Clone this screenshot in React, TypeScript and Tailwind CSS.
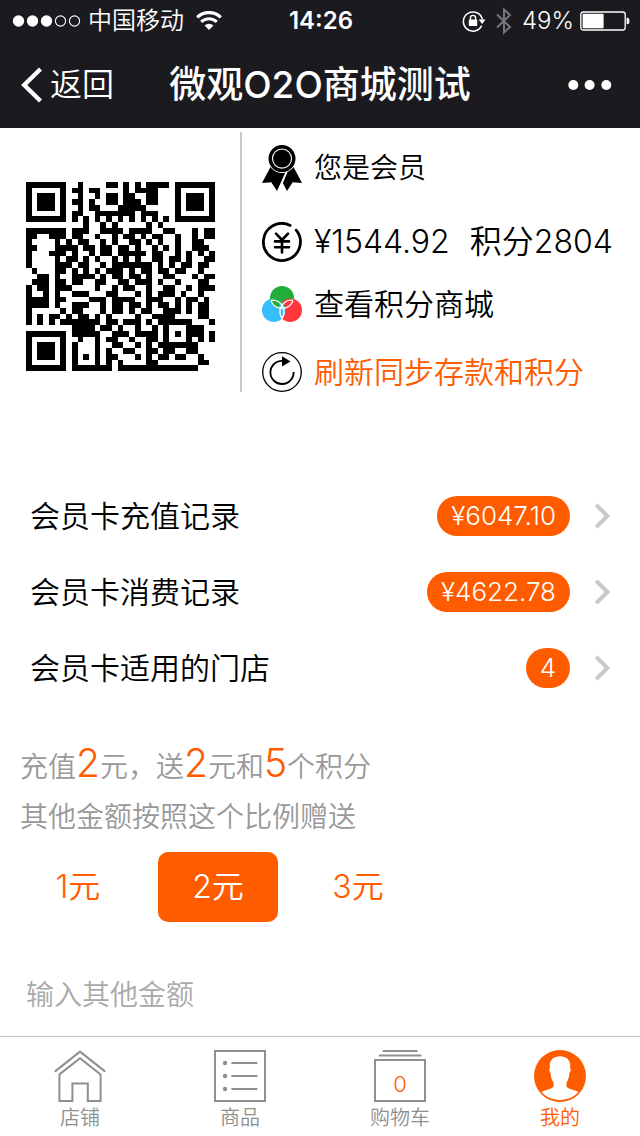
import React from "react";

const QR_ROWS = [
  "#######..#....##.#.#.####.#######",
  "#.....#.##.##....#.####...#.....#",
  "#.###.#..#..#.##.##..##...#.###.#",
  "#.###.#.##.#..##.###.##...#.###.#",
  "#.###.#..#.##...#####.....#.###.#",
  "#.....#.##..#######.###...#.....#",
  "#######.#.#.#.#.#.#.#.#.#.#######",
  "..........#..#.#.....#.#.........",
  "#######.###..####.####..##...#.##",
  "##..###.##..#..#.##.#.##..#..#.##",
  "#....#.#.##..#.#..##.#.#..#..##..",
  "##...####.##.##.##.#..#.#.#..###.",
  "#...###.#..#.##.#####.##..#.#.#.#",
  "#....#.##.#.#..#.#.#..##.##.#..##",
  "#....###.##..#.#######.#.#.##.##.",
  ".#...##.#.#.#.###.#.##.##.##..#..",
  "..##.#..####.#.##.##.#..##...#.##",
  ".###.##.##..##..##.###.#..#...##.",
  "#.##.###....#..#.##..#..##..#.###",
  "#..#.#..###...##...#.#.###.#..#..",
  "####.##....###.####..###..#.##.#.",
  "####.#..###..#.##.##.#.##.#.#.##.",
  "#.....#.##...#.##.#.##..###.#.##.",
  "#.#.##.#.##.#.#....#..####....##.",
  "#.#.#.#######.##.###.#.######...#",
  "........####.##.#..#..#.#...###..",
  "#######.#####..###.####.#.#.###.#",
  "#.....#..#..#.##..#..##.#...#.#.#",
  "#.###.#.#...#..##..#.#.#######...",
  "#.###.#.#...#.#..##..##.##..##...",
  "#.###.#.#.#.#.##...#.#.##.##..#..",
  "#.....#.#...#.#.#....##.......##.",
  "#######.#######.##############...",
];

function QrCode() {
  return (
    <svg
      viewBox="0 0 33 33"
      className="size-[189px]"
      shapeRendering="crispEdges"
      role="img"
      aria-label="会员二维码"
    >
      {QR_ROWS.map((row, y) =>
        Array.from(row.matchAll(/#+/g)).map((run) => (
          <rect key={`${y}-${run.index}`} x={run.index} y={y} width={run[0].length} height={1} />
        )),
      )}
    </svg>
  );
}

function StatusBar() {
  return (
    <div className="grid h-10 grid-cols-[1fr_auto_1fr] items-center pt-px pr-[10px] pl-3 text-2xl">
      <div className="flex items-center">
        <svg viewBox="0 0 70 14" className="mr-[6px] h-[14px] w-[70px]" fill="none" aria-hidden="true">
          <circle cx="6.5" cy="7" r="5.7" fill="#fff" />
          <circle cx="20.5" cy="7" r="5.7" fill="#fff" />
          <circle cx="34.5" cy="7" r="5.7" fill="#fff" />
          <circle cx="48.5" cy="7" r="5.1" stroke="#fff" strokeWidth="1.1" />
          <circle cx="62.5" cy="7" r="5.1" stroke="#fff" strokeWidth="1.1" />
        </svg>
        <span className="leading-8 font-[350]">中国移动</span>
        <svg viewBox="0 0 26 20" className="ml-3 h-5 w-[26px]" fill="none" stroke="#fff" aria-hidden="true">
          <path d="M1.2 6.3a17 17 0 0 1 23.6 0" strokeWidth="3.2" />
          <path d="M5.2 10.9a11.2 11.2 0 0 1 15.6 0" strokeWidth="3" />
          <path d="M13 19 8.6 14.6a6.2 6.2 0 0 1 8.8 0Z" fill="#fff" stroke="none" />
        </svg>
      </div>
      <span className="font-semibold">14:26</span>
      <div className="flex items-center justify-end">
        <svg viewBox="0 0 24 22" className="h-[22px] w-6" fill="none" aria-hidden="true">
          <path d="M19.7 15.6A9.6 9.6 0 1 1 20.4 9.6" stroke="#fff" strokeWidth="1.5" />
          <path d="M16.6 9.6h7l-3.5 4.4Z" fill="#fff" />
          <rect x="6.8" y="9.6" width="8.4" height="6.4" rx="0.8" fill="#fff" />
          <path d="M8.4 10V8a2.6 2.6 0 0 1 5.2 0v2" stroke="#fff" strokeWidth="1.4" />
        </svg>
        <svg viewBox="0 0 16 28" className="ml-[10px] h-7 w-4" fill="none" stroke="#77777a" strokeWidth="2" aria-hidden="true">
          <path d="M1 7.5 14 20 8 25.5V2.5L14 8 1 20.5" />
        </svg>
        <span className="ml-[10px] font-[350]">49%</span>
        <svg viewBox="0 0 50 20" className="ml-[6px] h-5 w-[50px]" fill="none" aria-hidden="true">
          <rect x="0.8" y="1" width="44.4" height="18" rx="2.5" stroke="#fff" strokeWidth="1.3" />
          <rect x="2.6" y="2.8" width="21" height="14.4" rx="0.8" fill="#fff" />
          <path d="M46.6 6.8h.8a2 3.2 0 0 1 0 6.4h-.8Z" fill="#fff" />
        </svg>
      </div>
    </div>
  );
}

function TitleBar() {
  return (
    <div className="grid h-[88px] grid-cols-[1fr_auto_1fr] items-center px-5 pt-[2px]">
      <button type="button" className="flex items-center text-[32px] leading-10 font-[350]">
        <svg viewBox="0 0 24 36" className="mr-[6px] h-9 w-6" fill="none" stroke="#fff" strokeWidth="4.4" aria-hidden="true">
          <path d="M20.5 2 4.2 18 20.5 34" />
        </svg>
        返回
      </button>
      <h1 className="text-[37px] leading-10 font-medium">微观O2O商城测试</h1>
      <button type="button" aria-label="更多" className="mr-2 justify-self-end">
        <svg viewBox="0 0 44 10" className="h-[10px] w-11" fill="#fff">
          <circle cx="5.3" cy="5" r="5" />
          <circle cx="21.6" cy="5" r="5" />
          <circle cx="38.3" cy="5" r="5" />
        </svg>
      </button>
    </div>
  );
}

function MedalIcon() {
  return (
    <svg viewBox="0 0 40 46" className="h-[46px] w-10" aria-hidden="true">
      <path d="M8.5 22 0 38l9.3-.8L15 46l9-20Z" />
      <path d="M31.5 22 40 38l-9.3-.8L25 46l-4.4-8.500L26 25Z" />
      <path d="M25.600 25 18.400 42" stroke="#fff" strokeWidth="1.400" />
      <circle cx="20" cy="13.600" r="14.400" fill="#fff" />
      <circle cx="20" cy="13.600" r="11.800" fill="none" stroke="#000" strokeWidth="3.400" />
      <circle cx="20" cy="13.600" r="9" />
    </svg>
  );
}

function YenIcon() {
  return (
    <svg viewBox="0 0 40 40" className="size-10" fill="none" stroke="#000" strokeWidth="2.8" strokeLinecap="round" aria-hidden="true">
      <path d="M34.2 8.2A18.5 18.5 0 1 1 28.2 3.4" />
      <path d="m14 11.6 6 6.4 6-6.4M20 18v12.4M13 19.4h14M13 25.2h14" strokeWidth="2.6" />
    </svg>
  );
}

function ColorsIcon() {
  return (
    <svg viewBox="0 0 40 36" className="h-9 w-10" aria-hidden="true">
      <defs>
        <clipPath id="top-circle"><circle cx="20" cy="12" r="11.6" /></clipPath>
        <clipPath id="left-circle"><circle cx="11.6" cy="24.4" r="11.6" /></clipPath>
      </defs>
      <circle cx="20" cy="12" r="12" fill="#22ac38" />
      <circle cx="11.8" cy="24.2" r="11.8" fill="#36bfff" />
      <circle cx="28.2" cy="24.2" r="11.8" fill="#ff373c" />
      <circle cx="11.8" cy="24.2" r="11.8" fill="#22ac38" clipPath="url(#top-circle)" />
      <circle cx="28.2" cy="24.2" r="11.8" fill="#36bfff" clipPath="url(#left-circle)" />
      <g fill="none" stroke="#fff" strokeWidth="1.3">
        <path d="M9 14.8a11.8 11.8 0 0 0 22 0" />
        <path d="M9 14.2a11.8 11.8 0 0 1 11 18.3" />
        <path d="M31 14.2a11.8 11.8 0 0 0-11 18.3" />
      </g>
    </svg>
  );
}

function RefreshIcon() {
  return (
    <svg viewBox="0 0 40 40" className="size-10" fill="none" stroke="#000" aria-hidden="true">
      <circle cx="20" cy="20" r="19.3" strokeWidth="1.3" />
      <path d="M31.6 20A11.6 11.6 0 1 1 20 8.8" strokeWidth="1.8" />
      <path d="M20 4.2 28.6 9.4 20 14.6Z" fill="#000" stroke="none" />
    </svg>
  );
}

function RecordRow({ label, value }: { label: string; value: string }) {
  return (
    <li>
      <a href="#" className="flex h-[76px] items-center px-[30px]">
        <span className="grow text-3xl leading-10">{label}</span>
        <span className="h-10 rounded-full bg-[#ff5c00] px-[14px] text-[26px] leading-10 font-light text-white">
          {value}
        </span>
        <svg viewBox="0 0 16 26" className="ml-6 h-[26px] w-4" fill="none" stroke="#c7c7cc" strokeWidth="4" aria-hidden="true">
          <path d="M2.2 1.8 13.4 13 2.2 24.2" />
        </svg>
      </a>
    </li>
  );
}

function Amount({ children }: { children: string }) {
  return <span className="text-[39px] text-[#ff5c00]">{children}</span>;
}

function HomeIcon() {
  return (
    <svg viewBox="0 0 52 52" className="size-[52px]" fill="none" stroke="#8f8f8f" strokeWidth="2" aria-hidden="true">
      <path d="M.8 21.6 26 1.6l25.2 20" />
      <path d="M5.4 24.4 26 8.2l20.6 16.2V51H33.8V33.4H18.4V51H5.4Z" />
    </svg>
  );
}

function ListIcon() {
  return (
    <svg viewBox="0 0 52 52" className="size-[52px]" fill="none" stroke="#8f8f8f" strokeWidth="2" aria-hidden="true">
      <rect x="1" y="1" width="50" height="50" />
      <path d="M17.4 13h26M17.4 26h26M17.4 39h26" />
      <g fill="#8f8f8f" stroke="none">
        <circle cx="11" cy="13" r="2.2" />
        <circle cx="11" cy="26" r="2.2" />
        <circle cx="11" cy="39" r="2.2" />
      </g>
    </svg>
  );
}

function CartIcon() {
  return (
    <span className="relative block size-[52px]">
      <svg viewBox="0 0 52 52" className="size-[52px]" fill="none" stroke="#8f8f8f" strokeWidth="2" aria-hidden="true">
        <path d="M8.6 1h35M5 5.4h42.4" />
        <rect x="1" y="10" width="50" height="41" />
      </svg>
      <span className="absolute inset-x-0 top-5 text-center text-[22px] leading-7 text-[#ff5c00]">0</span>
    </span>
  );
}

function ProfileIcon() {
  return (
    <svg viewBox="0 0 52 52" className="size-[52px]" aria-hidden="true">
      <circle cx="26" cy="26" r="26" fill="#ff5c00" />
      <path
        d="M26 6.200c6.400 0 10.200 3.600 10.200 9.400v2.400c1 .8.600 3.600-.6 4.400-.6 5-1.600 8.200-3.200 10.400v3.600c1 2.400 8 3.400 12.200 5.400C40.400 46.800 33.600 50 26 50S11.600 46.800 7.400 41.800c4.200-2 11.200-3 12.200-5.400v-3.600c-1.600-2.200-2.600-5.400-3.200-10.400-1.200-.8-1.600-3.600-.6-4.400v-2.400c0-5.800 3.800-9.400 10.200-9.400Z"
        fill="#fff"
      />
    </svg>
  );
}

const TABS = [
  { label: "店铺", icon: <HomeIcon />, active: false },
  { label: "商品", icon: <ListIcon />, active: false },
  { label: "购物车", icon: <CartIcon />, active: false },
  { label: "我的", icon: <ProfileIcon />, active: true },
];

export default function App() {
  const [amount, setAmount] = React.useState(2);

  return (
    <div className="flex min-h-screen flex-col bg-white font-['Inter','Noto_Sans_CJK_SC',sans-serif] font-[350] text-black">
      <header className="bg-[#1b1a1f] text-white">
        <StatusBar />
        <TitleBar />
      </header>

      <main className="grow">
        <section className="flex pt-1">
          <div className="flex w-[242px] shrink-0 justify-center border-r-2 border-[#c8c8cc] pt-[50px] pb-5">
            <QrCode />
          </div>
          <div className="flex flex-col pt-4 pl-5 text-3xl whitespace-nowrap">
            <div className="flex h-10 items-center gap-3">
              <MedalIcon />
              <span className="text-[28px] leading-10">您是会员</span>
            </div>
            <div className="mt-[34px] flex h-10 items-center gap-3 text-[32px] leading-10">
              <YenIcon />
              <span>¥1544.92</span>
              <span className="ml-2">积分2804</span>
            </div>
            <a href="#" className="mt-[22px] flex h-10 items-center gap-3 leading-10">
              <ColorsIcon />
              查看积分商城
            </a>
            <button type="button" className="mt-7 flex h-10 items-center gap-3 leading-10 text-[#ff5c00]">
              <RefreshIcon />
              <span>刷新同步存款和积分</span>
            </button>
          </div>
        </section>

        <ul className="mt-[86px]">
          <RecordRow label="会员卡充值记录" value="¥6047.10" />
          <RecordRow label="会员卡消费记录" value="¥4622.78" />
          <RecordRow label="会员卡适用的门店" value="4" />
        </ul>

        <section className="pt-8 text-[28px] text-[#999]">
          <p className="px-5 leading-[50px]">
            充值<Amount>2</Amount>元，送<Amount>2</Amount>元和<Amount>5</Amount>个积分
          </p>
          <p className="px-5 leading-[50px]">其他金额按照这个比例赠送</p>
          <div className="mt-[10px] flex gap-5 px-[18px] text-[32px]">
            {[1, 2, 3].map((value) => (
              <button
                key={value}
                type="button"
                aria-pressed={amount === value}
                onClick={() => setAmount(value)}
                className={
                  amount === value
                    ? "h-[70px] w-[120px] rounded-[10px] bg-[#ff5c00] text-white"
                    : "h-[70px] w-[120px] rounded-[10px] text-[#ff5c00]"
                }
              >
                {value}元
              </button>
            ))}
          </div>
          <input
            type="text"
            inputMode="decimal"
            aria-label="输入其他金额"
            placeholder="输入其他金额"
            className="mt-[38px] block h-[70px] w-full px-[26px] outline-none placeholder:text-[#a9a9a9]"
          />
        </section>
      </main>

      <nav className="grid h-[100px] grid-cols-4 border-t border-[#c4c4c4]">
        {TABS.map((tab) => (
          <a
            key={tab.label}
            href="#"
            aria-current={tab.active ? "page" : undefined}
            className={
              tab.active
                ? "flex flex-col items-center pt-[13px] text-xl leading-8 text-[#ff5c00]"
                : "flex flex-col items-center pt-[13px] text-xl leading-8 text-[#8f8f8f]"
            }
          >
            {tab.icon}
            {tab.label}
          </a>
        ))}
      </nav>
    </div>
  );
}
